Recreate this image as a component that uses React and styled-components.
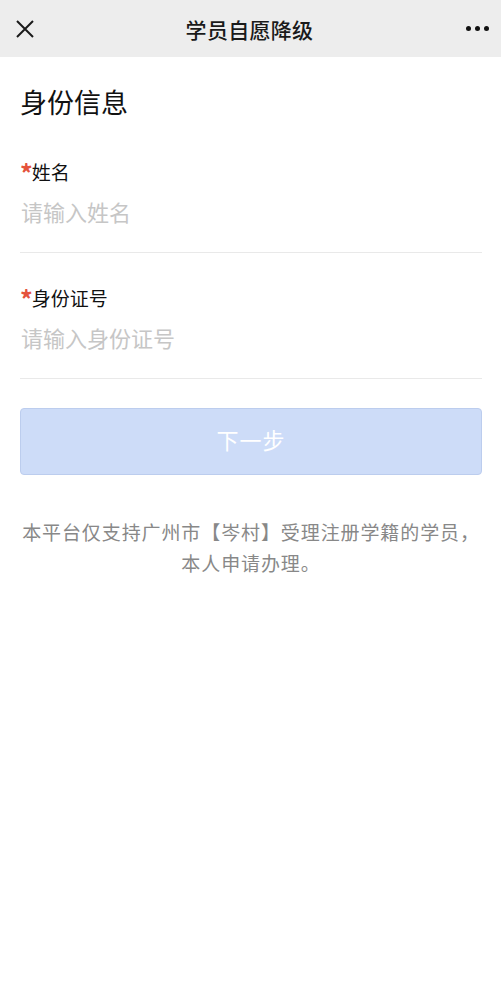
import React from "react";
import styled, { createGlobalStyle } from "styled-components";

const GlobalStyle = createGlobalStyle`
  html, body {
    margin: 0;
    padding: 0;
    background: #ffffff;
  }
  body {
    font-family: "Noto Sans CJK SC", "Noto Sans", sans-serif;
  }
`;

const fields = [
  { label: "姓名", placeholder: "请输入姓名" },
  { label: "身份证号", placeholder: "请输入身份证号" },
];

export default function App() {
  return (
    <Page>
      <GlobalStyle />
      <NavBar>
        <NavIcon aria-label="close">
          <svg width="18" height="18" viewBox="0 0 18 18">
            <path d="M1 1 L17 17 M17 1 L1 17" stroke="#1a1a1a" strokeWidth="2" />
          </svg>
        </NavIcon>
        <NavTitle>学员自愿降级</NavTitle>
        <NavIcon aria-label="more">
          <Dots>
            <Dot />
            <Dot />
            <Dot />
          </Dots>
        </NavIcon>
      </NavBar>
      <Content>
        <SectionTitle>身份信息</SectionTitle>
        {fields.map((f) => (
          <Field key={f.label}>
            <Label>
              <Star>*</Star>
              {f.label}
            </Label>
            <Input placeholder={f.placeholder} />
          </Field>
        ))}
        <NextButton disabled>下一步</NextButton>
        <Notice>
          本平台仅支持广州市【岑村】受理注册学籍的学员，
          <br />
          本人申请办理。
        </Notice>
      </Content>
    </Page>
  );
}

const Page = styled.div`
  width: 501px;
  min-height: 1000px;
  background: #ffffff;
`;

const NavBar = styled.div`
  height: 57px;
  background: #ededed;
  display: flex;
  align-items: center;
  justify-content: space-between;
  padding: 0 16px;
  box-sizing: border-box;
`;

const NavIcon = styled.div`
  width: 24px;
  height: 24px;
  display: flex;
  align-items: center;
  justify-content: center;
  &:first-child {
    justify-content: flex-start;
  }
  &:last-child {
    justify-content: flex-end;
    width: 40px;
    margin-right: -8px;
  }
`;

const Dots = styled.div`
  display: flex;
  gap: 4px;
  margin-right: 4px;
`;

const Dot = styled.span`
  width: 5px;
  height: 5px;
  border-radius: 50%;
  background: #111111;
`;

const NavTitle = styled.div`
  font-size: 21px;
  font-weight: 500;
  color: #1a1a1a;
  letter-spacing: 0.3px;
  margin-left: 6px;
`;

const Content = styled.div`
  padding: 0 19px 0 20px;
  display: flex;
  flex-direction: column;
`;

const SectionTitle = styled.h1`
  margin: 27px 0 0 0;
  font-size: 27px;
  font-weight: 400;
  line-height: 36px;
  color: #111111;
`;

const Field = styled.div`
  display: flex;
  flex-direction: column;
  border-bottom: 1px solid #e9e9e9;
  padding-top: 32px;
  &:first-of-type {
    padding-top: 39px;
  }
`;

const Label = styled.div`
  font-size: 19px;
  line-height: 26px;
  height: 26px;
  color: #111111;
  display: flex;
  align-items: flex-start;
`;

const Star = styled.span`
  color: #e4533c;
  font-size: 25px;
  font-weight: 700;
  line-height: 25px;
  margin-top: 1px;
  margin-right: -1px;
`;

const Input = styled.input`
  border: none;
  outline: none;
  padding: 0;
  margin: 11px 0 26px 1px;
  height: 30px;
  font-family: "Noto Sans CJK SC", "Noto Sans", sans-serif;
  font-size: 22px;
  color: #111111;
  background: transparent;
  &::placeholder {
    color: #c6c6c6;
  }
`;

const NextButton = styled.button`
  margin-top: 29px;
  height: 67px;
  padding: 0 0 5px 0;
  border: 1px solid #bccdee;
  border-radius: 4px;
  background: #cddcf8;
  color: #ffffff;
  font-family: "Noto Sans CJK SC", "Noto Sans", sans-serif;
  font-size: 22px;
  letter-spacing: 1px;
  cursor: default;
`;

const Notice = styled.p`
  margin: 41px 0 0 0;
  text-align: center;
  font-size: 19px;
  letter-spacing: 0.9px;
  line-height: 31px;
  color: #888888;
`;
